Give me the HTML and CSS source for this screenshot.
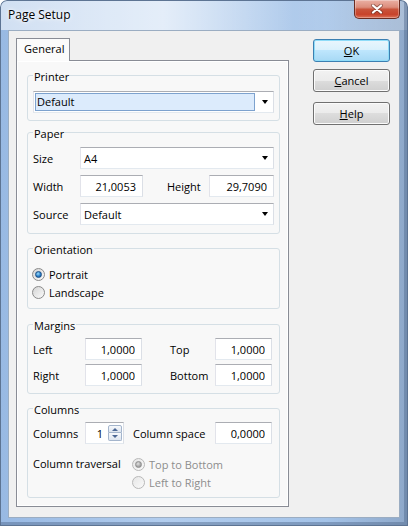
FILE: index.html
```html
<!DOCTYPE html>
<html lang="en">

<head>
    <meta charset="UTF-8">
    <title>Page Setup</title>
    <link rel="stylesheet" href="styles.css">
</head>

<body>
    <div class="window">
        <div class="titlebar">
            <span class="title">Page Setup</span>
            <span class="close">
                <svg width="12" height="10" viewBox="0 0 12 10">
                    <path d="M2 1.5 L10 8.5 M10 1.5 L2 8.5" stroke="#5a2b24" stroke-opacity=".55" stroke-width="3.8" stroke-linecap="round" fill="none"/>
                    <path d="M2 1.5 L10 8.5 M10 1.5 L2 8.5" stroke="#fff" stroke-width="2.2" stroke-linecap="round" fill="none"/>
                </svg>
            </span>
        </div>

        <div class="client">
            <div class="tabs">
                <div class="tab-strip">
                    <div class="tab">General</div>
                </div>
                <div class="tab-pane">

                    <div class="group group-printer">
                        <span class="group-title">Printer</span>
                        <div class="combo">
                            <span class="combo-sel">Default</span>
                            <span class="arrow"></span>
                        </div>
                    </div>

                    <div class="group group-paper">
                        <span class="group-title">Paper</span>
                        <div class="row">
                            <span class="label">Size</span>
                            <div class="combo">
                                <span class="combo-text">A4</span>
                                <span class="arrow"></span>
                            </div>
                        </div>
                        <div class="row">
                            <span class="label">Width</span>
                            <input class="edit w-63" type="text" value="21,0053">
                            <span class="label-2 h-label">Height</span>
                            <input class="edit w-65" type="text" value="29,7090">
                        </div>
                        <div class="row">
                            <span class="label">Source</span>
                            <div class="combo">
                                <span class="combo-text">Default</span>
                                <span class="arrow"></span>
                            </div>
                        </div>
                    </div>

                    <div class="group group-orient">
                        <span class="group-title">Orientation</span>
                        <label class="radio"><span class="radio-dot checked"></span>Portrait</label>
                        <label class="radio"><span class="radio-dot"></span>Landscape</label>
                    </div>

                    <div class="group group-margins">
                        <span class="group-title">Margins</span>
                        <div class="row">
                            <span class="label wide">Left</span>
                            <input class="edit w-57" type="text" value="1,0000">
                            <span class="label-2 m-label">Top</span>
                            <input class="edit w-57" type="text" value="1,0000">
                        </div>
                        <div class="row">
                            <span class="label wide">Right</span>
                            <input class="edit w-57" type="text" value="1,0000">
                            <span class="label-2 m-label">Bottom</span>
                            <input class="edit w-57" type="text" value="1,0000">
                        </div>
                    </div>

                    <div class="group group-columns">
                        <span class="group-title">Columns</span>
                        <div class="row">
                            <span class="label wide">Columns</span>
                            <div class="spin">
                                <span class="spin-value">1</span>
                                <span class="spin-btns">
                                    <span class="spin-btn up"></span>
                                    <span class="spin-btn down"></span>
                                </span>
                            </div>
                            <span class="label-2 c-label">Column space</span>
                            <input class="edit w-57" type="text" value="0,0000">
                        </div>
                        <div class="traversal">
                            <span class="t-label">Column traversal</span>
                            <div class="t-options">
                                <label class="radio disabled"><span class="radio-dot checked"></span>Top to Bottom</label>
                                <label class="radio disabled"><span class="radio-dot"></span>Left to Right</label>
                            </div>
                        </div>
                    </div>

                </div>
            </div>

            <div class="buttons">
                <button class="btn btn-default"><u>O</u>K</button>
                <button class="btn btn-cancel"><u>C</u>ancel</button>
                <button class="btn btn-help"><u>H</u>elp</button>
            </div>
        </div>
    </div>
</body>

</html>
```

FILE: styles.css
```css
* {
    margin: 0;
    padding: 0;
}

body {
    font-family: "Open Sans", "Noto Sans", sans-serif;
    font-size: 11px;
    color: #000;
    background: #fff;
}

.window {
    width: 408px;
    height: 526px;
    box-sizing: border-box;
    padding: 0 8px 8px;
    border-radius: 7px 7px 0 0;
    background:
        linear-gradient(to right, rgba(255, 255, 255, .55) 0, rgba(255, 255, 255, .65) 40%, rgba(255, 255, 255, .1) 72%, rgba(255, 255, 255, .25) 100%) top / 100% 30px no-repeat,
        linear-gradient(to right, #98b9e3 0, #b2cdee 40%, #a4c3e8 80%, #8ea8c9 100%);
    box-shadow: inset 0 0 0 1px #5d7493, inset -4px -4px 0 rgba(80, 105, 140, .45);
}

/* 标题栏 */
.titlebar {
    height: 30px;
    display: flex;
    justify-content: space-between;
    align-items: flex-start;
}

.title {
    margin-top: 7px;
    line-height: 15px;
    font-size: 12px;
    text-shadow: 0 0 6px #fff, 0 0 3px #fff;
}

.close {
    width: 46px;
    height: 19px;
    box-sizing: border-box;
    border: 1px solid #6a2c22;
    border-top: none;
    border-radius: 0 0 5px 5px;
    background: linear-gradient(#eab0a4 0, #dc8d7c 40%, #c9533b 52%, #c8432b 80%, #dc7258 100%);
    box-shadow: inset 0 0 0 1px rgba(255, 255, 255, .3);
    display: flex;
    align-items: center;
    justify-content: center;
}

/* 客户区 */
.client {
    height: 488px;
    box-sizing: border-box;
    border: 1px solid #9badc2;
    background: #f0f0f0;
    padding: 7px 9px 10px 7px;
    display: flex;
    gap: 24px;
}

.tabs {
    width: 273px;
    display: flex;
    flex-direction: column;
}

.tab-strip {
    height: 22px;
    display: flex;
}

.tab {
    position: relative;
    z-index: 1;
    width: 54px;
    height: 23px;
    box-sizing: border-box;
    border: 1px solid #898c95;
    border-bottom: none;
    background: #fbfbfb;
    padding-left: 7px;
    line-height: 20px;
}

.tab-pane {
    height: 447px;
    box-sizing: border-box;
    border: 1px solid #898c95;
    background: #f8f8f8;
    box-shadow: inset 0 0 0 1px #fff;
    padding: 14px 8px 0 10px;
    display: flex;
    flex-direction: column;
}

/* 分组框 */
.group {
    border: 1px solid #d5dfe5;
    border-radius: 3px;
    padding: 0 5px 7px;
    display: flex;
    flex-direction: column;
}

.group-title {
    align-self: flex-start;
    margin: -7px 0 7px;
    padding: 0 1px;
    line-height: 15px;
    background: #f8f8f8;
}

.group-paper {
    margin-top: 11px;
    padding-bottom: 8px;
    gap: 6px;
}

.group-paper .group-title {
    margin-bottom: 0;
}

.group-orient {
    margin-top: 14px;
}

.group-orient .group-title {
    margin-bottom: 8px;
}

.group-margins {
    margin-top: 15px;
    padding-bottom: 7px;
    gap: 4px;
}

.group-margins .group-title {
    margin-bottom: 1px;
}

.group-columns {
    margin-top: 14px;
    padding-bottom: 6px;
}

.group-columns .group-title {
    margin-bottom: 5px;
}

.row {
    height: 22px;
    display: flex;
    align-items: center;
}

.label {
    width: 47px;
}

.label.wide {
    width: 52px;
}

.h-label {
    padding-left: 24px;
    width: 42px;
}

.m-label {
    padding-left: 28px;
    width: 45px;
}

.c-label {
    padding-left: 9px;
    width: 82px;
}

/* 下拉框 */
.combo {
    flex: 1;
    height: 22px;
    box-sizing: border-box;
    border: 1px solid;
    border-color: #abadb3 #dbdfe6 #e3e9ef #e2e3ea;
    background: #fff;
    display: flex;
    align-items: center;
    padding: 0 5px 0 3px;
}

.group-printer .combo {
    flex: none;
    padding-left: 1px;
}

.combo-text {
    flex: 1;
}

.combo-sel {
    flex: 1;
    height: 18px;
    box-sizing: border-box;
    border: 1px solid #7da2ce;
    background: #dcebfc;
    padding-left: 1px;
    line-height: 16px;
}

.arrow {
    width: 0;
    height: 0;
    margin-left: 7px;
    border-top: 4px solid #000;
    border-left: 3.5px solid transparent;
    border-right: 3.5px solid transparent;
}

/* 输入框 */
.edit {
    height: 22px;
    box-sizing: border-box;
    border: 1px solid;
    border-color: #abadb3 #dbdfe6 #e3e9ef #e2e3ea;
    background: #fff;
    padding: 0 6px 0 3px;
    text-align: right;
    font: inherit;
    color: #000;
    outline: none;
}

.w-63 {
    width: 63px;
}

.w-65 {
    width: 65px;
}

.w-57 {
    width: 57px;
}

.spin {
    width: 39px;
    height: 22px;
    box-sizing: border-box;
    border: 1px solid;
    border-color: #abadb3 #dbdfe6 #e3e9ef #e2e3ea;
    background: #fff;
    display: flex;
    align-items: center;
    padding-right: 1px;
}

.spin-value {
    flex: 1;
    text-align: right;
    padding-right: 5px;
}

.spin-btns {
    display: flex;
    flex-direction: column;
}

.spin-btn {
    width: 14px;
    height: 8px;
    box-sizing: border-box;
    border: 1px solid #a4b5cc;
    background: linear-gradient(#f7f9fc, #dde5ef);
    display: flex;
    align-items: center;
    justify-content: center;
}

.spin-btn.up {
    border-radius: 2px 2px 0 0;
}

.spin-btn.down {
    border-top: none;
    border-radius: 0 0 2px 2px;
}

.spin-btn::after {
    content: "";
    width: 0;
    height: 0;
    border-left: 3px solid transparent;
    border-right: 3px solid transparent;
}

.spin-btn.up::after {
    border-bottom: 3px solid #4b6794;
}

.spin-btn.down::after {
    border-top: 3px solid #4b6794;
}

/* 单选框 */
.radio {
    height: 18px;
    display: flex;
    align-items: center;
}

.radio-dot {
    width: 13px;
    height: 13px;
    box-sizing: border-box;
    margin: 0 4px 0 -1px;
    border: 1px solid #8a8a8a;
    border-radius: 50%;
    background: linear-gradient(135deg, #d4d4d4, #fbfbfb);
    display: flex;
    align-items: center;
    justify-content: center;
}

.radio-dot.checked::after {
    content: "";
    width: 7px;
    height: 7px;
    box-sizing: border-box;
    border-radius: 50%;
    border: 1px solid #1b4f86;
    background: radial-gradient(circle at 40% 35%, #9cdcfb, #2a7fc8 55%, #0f4a8a);
}

.radio.disabled {
    color: #8d8d8d;
}

.radio.disabled .radio-dot {
    border-color: #b8b8b8;
    background: linear-gradient(135deg, #e6e6e6, #fafafa);
}

.radio.disabled .radio-dot.checked::after {
    border-color: #8e8e8e;
    background: radial-gradient(circle at 40% 35%, #e2e2e2, #a5a5a5 60%, #8a8a8a);
}

.traversal {
    margin-top: 11px;
    display: flex;
}

.t-label {
    width: 100px;
    line-height: 18px;
}

/* 按钮 */
.buttons {
    display: flex;
    flex-direction: column;
    padding-top: 1px;
}

.btn {
    width: 77px;
    height: 23px;
    box-sizing: border-box;
    border: 1px solid #707070;
    border-radius: 3px;
    background: linear-gradient(#f2f2f2 0, #ebebeb 50%, #dddddd 50%, #cfcfcf 100%);
    box-shadow: inset 0 0 0 1px #fbfbfb;
    font: inherit;
    color: #000;
    line-height: 20px;
    text-align: center;
}

.btn-default {
    border-color: #3c7fb1;
    background: linear-gradient(#eaf6fd 0, #d9f0fc 50%, #bee6fd 50%, #a7d9f5 100%);
    box-shadow: inset 0 0 0 1px #8fdcf8;
}

.btn-cancel {
    margin-top: 7px;
}

.btn-help {
    margin-top: 10px;
}
```
